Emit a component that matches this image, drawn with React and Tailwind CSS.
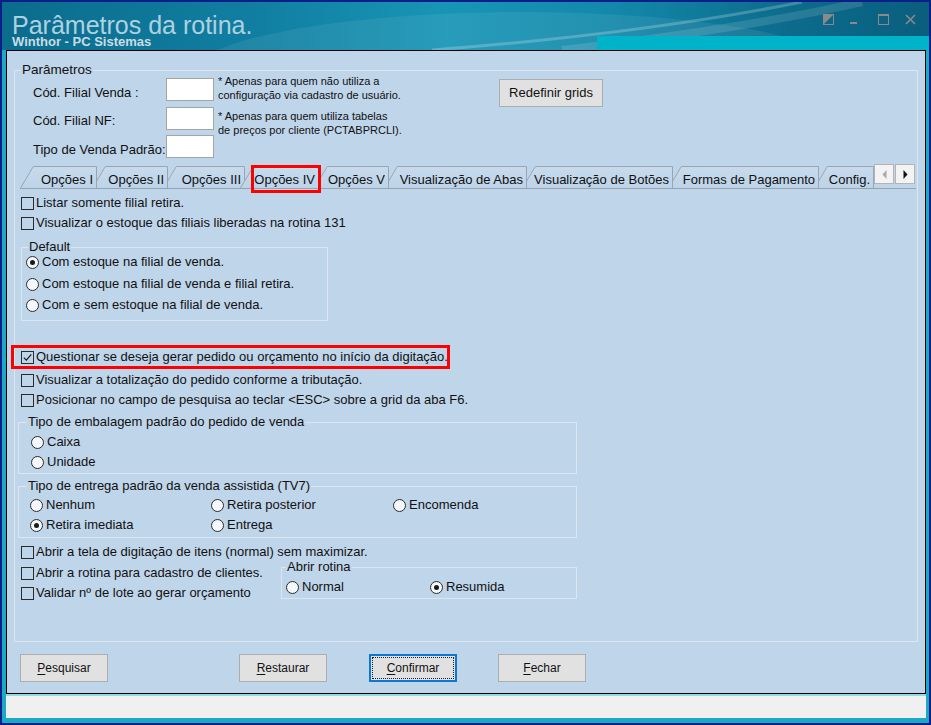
import React from "react";

const FONT = "font-['Liberation_Sans',Arial,sans-serif]";
const PANEL = "bg-[#bfd5ea]";

const tabs = [
  { label: "Opções I", w: "w-[77px]", W: 77, z: "z-[9]", ml: "" },
  { label: "Opções II", w: "w-[76px]", W: 76, z: "z-[8]", ml: "-ml-[5px]" },
  { label: "Opções III", w: "w-[82px]", W: 82, z: "z-[7]", ml: "-ml-[5px]" },
  { label: "Opções IV", w: "w-[79px]", W: 79, z: "z-[20]", ml: "-ml-[5px]", active: true },
  { label: "Opções V", w: "w-[75px]", W: 75, z: "z-[5]", ml: "-ml-[5px]" },
  { label: "Visualização de Abas", w: "w-[143px]", W: 143, z: "z-[4]", ml: "-ml-[5px]" },
  { label: "Visualização de Botões", w: "w-[151px]", W: 151, z: "z-[3]", ml: "-ml-[5px]" },
  { label: "Formas de Pagamento", w: "w-[151px]", W: 151, z: "z-[2]", ml: "-ml-[5px]" },
  { label: "Config.", w: "w-[60px]", W: 60, z: "z-[1]", ml: "-ml-[5px]" },
];

function Tab({ t, i }) {
  return (
    <div className={`relative h-[22px] shrink-0 ${t.w} ${t.z} ${t.ml}`}>
      <svg className="absolute inset-0" width={t.W} height="22" viewBox={`0 0 ${t.W} 22`}>
        <defs>
          <linearGradient id={`tg${i}`} x1="0" y1="0" x2="0" y2="1">
            <stop offset="0" stopColor="#c8dbed" />
            <stop offset="1" stopColor="#bdd3e9" />
          </linearGradient>
        </defs>
        <polygon points={`0,22 13,0 ${t.W},0 ${t.W},22`} fill={`url(#tg${i})`} />
        <path
          d={`M0.5 22 L13.3 0.5 L${t.W - 0.5} 0.5 L${t.W - 0.5} 22`}
          fill="none"
          stroke="#9aa5b1"
        />
      </svg>
      <div className="relative flex justify-end pr-[4px] pt-[6px] leading-[15px] whitespace-nowrap">
        {t.label}
      </div>
      {t.active && (
        <div className="absolute left-[11px] -top-[1px] w-[70px] h-[28px] border-[3px] border-[#ff0000]" />
      )}
    </div>
  );
}

function Check({ checked }) {
  return (
    <span className="w-[13px] h-[13px] shrink-0 border border-[#2b2b2b] flex items-center justify-center">
      {checked && (
        <svg width="11" height="11" viewBox="0 0 11 11">
          <path d="M1.8 5.6 L4.3 8.1 L9.3 2.4" fill="none" stroke="#1a1a1a" strokeWidth="1.2" />
        </svg>
      )}
    </span>
  );
}

function Radio({ checked }) {
  return (
    <span className="w-[13px] h-[13px] shrink-0 rounded-full border border-[#2b2b2b] bg-[#f4f7fb] flex items-center justify-center">
      {checked && <span className="w-[5px] h-[5px] rounded-full bg-[#1a1a1a]" />}
    </span>
  );
}

function CheckRow({ label, checked, className = "" }) {
  return (
    <div className={`flex items-center h-[16px] pl-[6px] ${className}`}>
      <Check checked={checked} />
      <span className="ml-[2px] leading-[16px] whitespace-nowrap">{label}</span>
    </div>
  );
}

function RadioOpt({ label, checked, className = "" }) {
  return (
    <div className={`flex items-center h-[16px] shrink-0 ${className}`}>
      <Radio checked={checked} />
      <span className="ml-[3px] leading-[16px] whitespace-nowrap">{label}</span>
    </div>
  );
}

function GroupBox({ legend, legendPos, className = "", children }) {
  return (
    <div className={`relative shrink-0 border border-[#dbe6f1] ${className}`}>
      <span
        className={`absolute -top-[9px] px-[1px] ${PANEL} leading-[16px] whitespace-nowrap ${legendPos}`}
      >
        {legend}
      </span>
      {children}
    </div>
  );
}

function Btn({ children, className = "" }) {
  return (
    <div
      className={`w-[88px] h-[28px] shrink-0 bg-[#e1e1e1] border border-[#adadad] flex items-center justify-center text-[12px] ${className}`}
    >
      {children}
    </div>
  );
}

function TitleBar() {
  return (
    <div className="relative h-[48px] shrink-0 overflow-hidden bg-[linear-gradient(90deg,#0b6c8c_0%,#117fa2_28%,#1895b6_48%,#1388aa_66%,#0c6b8c_85%,#0a5e7e_100%)]">
      <svg className="absolute inset-0" width="927" height="48" viewBox="0 0 927 48">
        <ellipse cx="520" cy="72" rx="330" ry="62" fill="#ffffff" fillOpacity="0.07" />
        <path d="M430 48 C 560 38, 690 22, 800 0" stroke="#ffffff" strokeOpacity="0.22" strokeWidth="3" fill="none" />
        <path d="M560 48 C 680 34, 780 18, 860 0" stroke="#ffffff" strokeOpacity="0.12" strokeWidth="8" fill="none" />
        <rect x="595" y="34" width="332" height="14" fill="#00b3c9" />
      </svg>
      <div className="relative flex">
        <div className="pl-[10px]">
          <div className="mt-[12px] text-[25px] leading-[22px] text-[#aed1e1] whitespace-nowrap">
            Parâmetros da rotina.
          </div>
          <div className="text-[13px] leading-[11px] font-bold text-[#cbdbe4] whitespace-nowrap">
            Winthor - PC Sistemas
          </div>
        </div>
        <div className="ml-auto mr-[13px] mt-[12px] flex items-start">
          <svg width="11" height="11" viewBox="0 0 11 11">
            <rect x="0.5" y="0.5" width="10" height="10" fill="none" stroke="#8a8a8a" />
            <polygon points="0,0 11,0 0,11" fill="#8a8a8a" />
          </svg>
          <svg className="ml-[16px]" width="7" height="11" viewBox="0 0 7 11">
            <rect x="0" y="8" width="7" height="2" fill="#8a8a8a" />
          </svg>
          <svg className="ml-[21px]" width="11" height="11" viewBox="0 0 11 11">
            <rect x="0.5" y="0.5" width="10" height="10" fill="none" stroke="#8a8a8a" />
            <rect x="0" y="0" width="11" height="2" fill="#8a8a8a" />
          </svg>
          <svg className="ml-[16px]" width="11" height="11" viewBox="0 0 11 11">
            <path d="M1 1 L10 10 M10 1 L1 10" stroke="#8a8a8a" strokeWidth="1.6" />
          </svg>
        </div>
      </div>
    </div>
  );
}

function ParamGroup() {
  return (
    <div className="relative w-[904px] h-[572px] border border-[#dbe6f1]">
      <span className={`absolute left-[6px] -top-[9px] px-[1px] ${PANEL} text-[13.5px] leading-[16px]`}>
        Parâmetros
      </span>

      <div className="flex items-start h-[23px] mt-[7px]">
        <div className="w-[151px] shrink-0 pl-[18px] mt-[7px] leading-[15px] whitespace-nowrap">
          Cód. Filial Venda :
        </div>
        <div className="w-[48px] h-[23px] shrink-0 bg-white border border-[#a5a5a5]" />
        <div className="ml-[4px] w-[281px] shrink-0 -mt-[4px] text-[11px] leading-[14px] whitespace-nowrap">
          * Apenas para quem não utiliza a
          <br />
          configuração via cadastro de usuário.
        </div>
        <div className="mt-[1px] w-[104px] h-[28px] shrink-0 bg-[#e1e1e1] border border-[#adadad] flex items-center justify-center">
          Redefinir grids
        </div>
      </div>

      <div className="flex items-start h-[23px] mt-[6px]">
        <div className="w-[151px] shrink-0 pl-[18px] mt-[6px] leading-[15px] whitespace-nowrap">
          Cód. Filial NF:
        </div>
        <div className="w-[48px] h-[23px] shrink-0 bg-white border border-[#a5a5a5]" />
        <div className="ml-[4px] w-[281px] shrink-0 mt-[2px] text-[11px] leading-[14px] whitespace-nowrap">
          * Apenas para quem utiliza tabelas
          <br />
          de preços por cliente (PCTABPRCLI).
        </div>
      </div>

      <div className="flex items-start h-[23px] mt-[5px]">
        <div className="w-[151px] shrink-0 pl-[18px] mt-[7px] leading-[15px] whitespace-nowrap">
          Tipo de Venda Padrão:
        </div>
        <div className="w-[48px] h-[23px] shrink-0 bg-white border border-[#a5a5a5]" />
      </div>

      {/* tab strip */}
      <div className="flex items-end h-[24px] mt-[6px] pl-[5px]">
        {tabs.map((t, i) => (
          <Tab key={t.label} t={t} i={i} />
        ))}
        <div className="self-start relative z-[30] w-[20px] h-[20px] shrink-0 bg-[#f3f3f3] border border-[#b4b4b4] flex items-center justify-center">
          <svg width="5" height="9" viewBox="0 0 5 9">
            <path d="M4.5 0 L0.5 4.5 L4.5 9 Z" fill="#a8a8a8" />
          </svg>
        </div>
        <div className="self-start relative z-[30] ml-[1px] w-[20px] h-[20px] shrink-0 bg-[#f3f3f3] border border-[#b4b4b4] flex items-center justify-center">
          <svg width="5" height="9" viewBox="0 0 5 9">
            <path d="M0.5 0 L4.5 4.5 L0.5 9 Z" fill="#111111" />
          </svg>
        </div>
      </div>
      <div className="ml-[5px] w-[896px] h-[1px] bg-[#98a3ae]" />

      {/* tab content */}
      <CheckRow className="mt-[6px]" label="Listar somente filial retira." />
      <CheckRow className="mt-[4px]" label="Visualizar o estoque das filiais liberadas na rotina 131" />

      <GroupBox legend="Default" legendPos="left-[6px]" className="ml-[6px] mt-[16px] w-[307px] h-[74px]">
        <RadioOpt className="ml-[4px] mt-[6px]" checked label="Com estoque na filial de venda." />
        <RadioOpt className="ml-[4px] mt-[6px]" label="Com estoque na filial de venda e filial retira." />
        <RadioOpt className="ml-[4px] mt-[5px]" label="Com e sem estoque na filial de venda." />
      </GroupBox>

      <div className="relative mt-[28px]">
        <CheckRow checked label="Questionar se deseja gerar pedido ou orçamento no início da digitação." />
        <div className="absolute -left-[4px] -top-[4px] w-[439px] h-[24px] border-[3px] border-[#ff0000]" />
      </div>
      <CheckRow className="mt-[7px]" label="Visualizar a totalização do pedido conforme a tributação." />
      <CheckRow className="mt-[4px]" label="Posicionar no campo de pesquisa ao teclar <ESC> sobre a grid da aba F6." />

      <GroupBox
        legend="Tipo de embalagem padrão do pedido de venda"
        legendPos="left-[8px]"
        className="ml-[3px] mt-[14px] w-[559px] h-[52px]"
      >
        <RadioOpt className="ml-[12px] mt-[11px]" label="Caixa" />
        <RadioOpt className="ml-[12px] mt-[4px]" label="Unidade" />
      </GroupBox>

      <GroupBox
        legend="Tipo de entrega padrão da venda assistida (TV7)"
        legendPos="left-[8px]"
        className="ml-[3px] mt-[12px] w-[559px] h-[52px]"
      >
        <div className="flex mt-[10px] ml-[11px]">
          <RadioOpt className="w-[181px]" label="Nenhum" />
          <RadioOpt className="w-[182px]" label="Retira posterior" />
          <RadioOpt label="Encomenda" />
        </div>
        <div className="flex mt-[4px] ml-[11px]">
          <RadioOpt className="w-[181px]" checked label="Retira imediata" />
          <RadioOpt label="Entrega" />
        </div>
      </GroupBox>

      <CheckRow className="mt-[6px]" label="Abrir a tela de digitação de itens (normal) sem maximizar." />
      <div className="flex items-start">
        <div className="w-[266px] shrink-0">
          <CheckRow className="mt-[5px]" label="Abrir a rotina para cadastro de clientes." />
          <CheckRow className="mt-[4px]" label="Validar nº de lote ao gerar orçamento" />
        </div>
        <GroupBox legend="Abrir rotina" legendPos="left-[4px]" className="mt-[7px] w-[296px] h-[32px]">
          <div className="flex mt-[11px] ml-[4px]">
            <RadioOpt className="w-[144px]" label="Normal" />
            <RadioOpt checked label="Resumida" />
          </div>
        </GroupBox>
      </div>
    </div>
  );
}

export default function App() {
  return (
    <div className={`w-[931px] h-[725px] bg-[#0c1d8c] p-[2px] overflow-hidden text-[13px] text-[#111111] ${FONT}`}>
      <div className="h-full flex flex-col bg-[#1ba9c3]">
        <TitleBar />
        <div className={`ml-[4px] w-[920px] h-[644px] shrink-0 border border-black ${PANEL} pl-[7px] pt-[19px]`}>
          <ParamGroup />
          <div className="flex mt-[12px]">
            <Btn className="ml-[6px]">
              <span className="underline underline-offset-2">P</span>esquisar
            </Btn>
            <Btn className="ml-[131px]">
              <span className="underline underline-offset-2">R</span>estaurar
            </Btn>
            <div className="ml-[42px] w-[88px] h-[28px] shrink-0 bg-[#e1e1e1] border-2 border-[#0a78d4] p-[1px] text-[12px]">
              <div className="w-full h-full border border-dotted border-[#222] flex items-center justify-center">
                <span className="underline underline-offset-2">C</span>onfirmar
              </div>
            </div>
            <Btn className="ml-[41px]">
              <span className="underline underline-offset-2">F</span>echar
            </Btn>
          </div>
        </div>
        <div className="ml-[4px] w-[920px] h-[24px] shrink-0 border-t-2 border-[#8cdbe6] bg-[#f0f0f0]" />
      </div>
    </div>
  );
}
